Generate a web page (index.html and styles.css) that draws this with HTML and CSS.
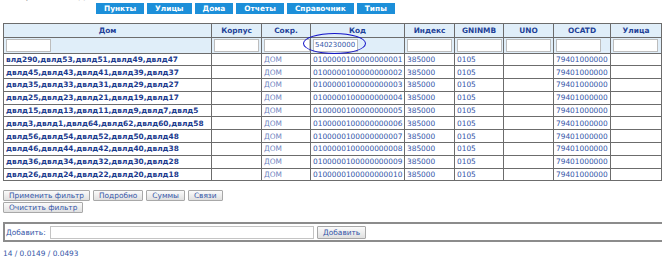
FILE: index.html
```html
<!DOCTYPE html>
<html lang="ru">
<head>
    <meta charset="UTF-8">
    <title>Дома</title>
    <link rel="stylesheet" href="styles.css">
</head>
<body>
    <div class="page">
        <div class="topbar">
            <div class="caption">Справочник дом</div>
            <nav class="tabs">
                <a class="tab" href="#">Пункты</a>
                <a class="tab" href="#">Улицы</a>
                <a class="tab" href="#">Дома</a>
                <a class="tab" href="#">Отчеты</a>
                <a class="tab" href="#">Справочник</a>
                <a class="tab" href="#">Типы</a>
            </nav>
        </div>

        <table class="grid">
            <colgroup>
                <col style="width:208px"><col style="width:50px"><col style="width:49px">
                <col style="width:94px"><col style="width:50px"><col style="width:49px">
                <col style="width:50px"><col style="width:57px"><col style="width:51px">
            </colgroup>
            <thead>
                <tr>
                    <th>Дом</th><th>Корпус</th><th>Сокр.</th><th>Код</th><th>Индекс</th>
                    <th>GNINMB</th><th>UNO</th><th>OCATD</th><th>Улица</th>
                </tr>
                <tr class="filter">
                    <td><input type="text"></td>
                    <td><input type="text"></td>
                    <td><input type="text" class="wide"></td>
                    <td><span class="marked"><input type="text" value="540230000"></span></td>
                    <td><input type="text"></td>
                    <td><input type="text"></td>
                    <td><input type="text"></td>
                    <td><input type="text"></td>
                    <td><input type="text"></td>
                </tr>
            </thead>
            <tbody>
                <tr><td class="name">влд290,двлд53,двлд51,двлд49,двлд47</td><td></td><td class="abbr">ДОМ</td><td>0100000100000000001</td><td>385000</td><td>0105</td><td></td><td>79401000000</td><td></td></tr>
                <tr><td class="name">двлд45,двлд43,двлд41,двлд39,двлд37</td><td></td><td class="abbr">ДОМ</td><td>0100000100000000002</td><td>385000</td><td>0105</td><td></td><td>79401000000</td><td></td></tr>
                <tr><td class="name">двлд35,двлд33,двлд31,двлд29,двлд27</td><td></td><td class="abbr">ДОМ</td><td>0100000100000000003</td><td>385000</td><td>0105</td><td></td><td>79401000000</td><td></td></tr>
                <tr><td class="name">двлд25,двлд23,двлд21,двлд19,двлд17</td><td></td><td class="abbr">ДОМ</td><td>0100000100000000004</td><td>385000</td><td>0105</td><td></td><td>79401000000</td><td></td></tr>
                <tr><td class="name">двлд15,двлд13,двлд11,двлд9,двлд7,двлд5</td><td></td><td class="abbr">ДОМ</td><td>0100000100000000005</td><td>385000</td><td>0105</td><td></td><td>79401000000</td><td></td></tr>
                <tr><td class="name">двлд3,двлд1,двлд64,двлд62,двлд60,двлд58</td><td></td><td class="abbr">ДОМ</td><td>0100000100000000006</td><td>385000</td><td>0105</td><td></td><td>79401000000</td><td></td></tr>
                <tr><td class="name">двлд56,двлд54,двлд52,двлд50,двлд48</td><td></td><td class="abbr">ДОМ</td><td>0100000100000000007</td><td>385000</td><td>0105</td><td></td><td>79401000000</td><td></td></tr>
                <tr><td class="name">двлд46,двлд44,двлд42,двлд40,двлд38</td><td></td><td class="abbr">ДОМ</td><td>0100000100000000008</td><td>385000</td><td>0105</td><td></td><td>79401000000</td><td></td></tr>
                <tr><td class="name">двлд36,двлд34,двлд32,двлд30,двлд28</td><td></td><td class="abbr">ДОМ</td><td>0100000100000000009</td><td>385000</td><td>0105</td><td></td><td>79401000000</td><td></td></tr>
                <tr><td class="name">двлд26,двлд24,двлд22,двлд20,двлд18</td><td></td><td class="abbr">ДОМ</td><td>0100000100000000010</td><td>385000</td><td>0105</td><td></td><td>79401000000</td><td></td></tr>
            </tbody>
        </table>

        <div class="actions">
            <div class="btn-row">
                <button class="btn">Применить фильтр</button>
                <button class="btn">Подробно</button>
                <button class="btn">Суммы</button>
                <button class="btn">Связи</button>
            </div>
            <div class="btn-row">
                <button class="btn">Очистить фильтр</button>
            </div>
        </div>

        <div class="addbar">
            <label class="add-label">Добавить:</label>
            <input type="text" class="add-input">
            <button class="btn add-btn">Добавить</button>
        </div>

        <p class="stats">14 / 0.0149 / 0.0493</p>
    </div>
</body>
</html>
```

FILE: styles.css
```css
html, body {
    margin: 0;
    padding: 0;
    overflow: hidden;
    background: #fff;
}

body {
    font-family: "DejaVu Sans", Verdana, sans-serif;
    font-size: 7.4px;
    color: #3456a8;
}

.page {
    padding-left: 3px;
}

/* top line: page caption + menu tabs */
.topbar {
    display: flex;
    height: 22.5px;
}

.caption {
    width: 84px;
    padding-left: 9px;
    margin-top: -9px;
    height: 10px;
    font-size: 10px;
    line-height: 10px;
    color: #a8a8a8;
    white-space: nowrap;
    overflow: hidden;
}

.tabs {
    display: flex;
    gap: 3px;
    margin-top: 3px;
    height: 11px;
}

.tab {
    background: #1c8fd9;
    color: #fff;
    font-weight: bold;
    line-height: 11px;
    padding: 0 8px;
    text-decoration: none;
}

/* grid */
.grid {
    border-collapse: collapse;
    table-layout: fixed;
    width: 658px;
    border: 1px solid #555;
}

.grid th {
    background: #e0eef9;
    color: #1f4298;
    font-weight: bold;
    height: 13px;
    padding: 0;
    border: 1px solid #6c6c6c;
}

.grid td {
    border: 1px solid #6c6c6c;
    padding: 0 2px;
    height: 11.8px;
    line-height: 11px;
    white-space: nowrap;
    overflow: hidden;
}

.filter td {
    background: #e0eef9;
    height: 15px;
    padding: 0 1px 0 2px;
    overflow: visible;
}

.filter input {
    box-sizing: border-box;
    width: 45px;
    height: 13px;
    margin: 0;
    padding: 0 0 0 1px;
    border: 1px solid #bdbdbd;
    background: #fff;
    font: 7px "DejaVu Sans", Verdana, sans-serif;
    color: #3456a8;
    display: block;
}

.filter input.wide {
    width: 46px;
}

.marked {
    position: relative;
    display: block;
}

.marked::after {
    content: "";
    position: absolute;
    left: -10px;
    top: -6px;
    width: 63px;
    height: 21px;
    border: 1px solid #1414c8;
    border-radius: 50%;
    box-sizing: border-box;
    pointer-events: none;
}

.grid .name {
    font-weight: bold;
    color: #1c3b8e;
}

.grid .abbr {
    color: #6f86bf;
}

/* buttons */
.actions {
    margin-top: 9px;
}

.btn-row {
    display: flex;
    gap: 3px;
    margin-bottom: 1px;
}

.btn {
    height: 11px;
    margin: 0;
    padding: 0 5px;
    font: 7.4px "DejaVu Sans", Verdana, sans-serif;
    line-height: 9px;
    color: #3456a8;
    background: linear-gradient(#fbfbfb, #e0e0e0);
    border: 1px solid #a8a8a8;
    border-radius: 1px;
}

.addbar {
    display: flex;
    align-items: center;
    width: 700px;
    height: 16px;
    margin-top: 9px;
    border: 2px solid #8c8c8c;
    border-right: none;
    padding-left: 1px;
}

.add-label {
    width: 44px;
}

.add-input {
    box-sizing: border-box;
    width: 264px;
    height: 13px;
    margin: 0;
    border: 1px solid #c4c4c4;
}

.add-btn {
    height: 13px;
    margin-left: 3px;
    padding: 0 5px;
}

.stats {
    margin: 7px 0 0;
}
```
